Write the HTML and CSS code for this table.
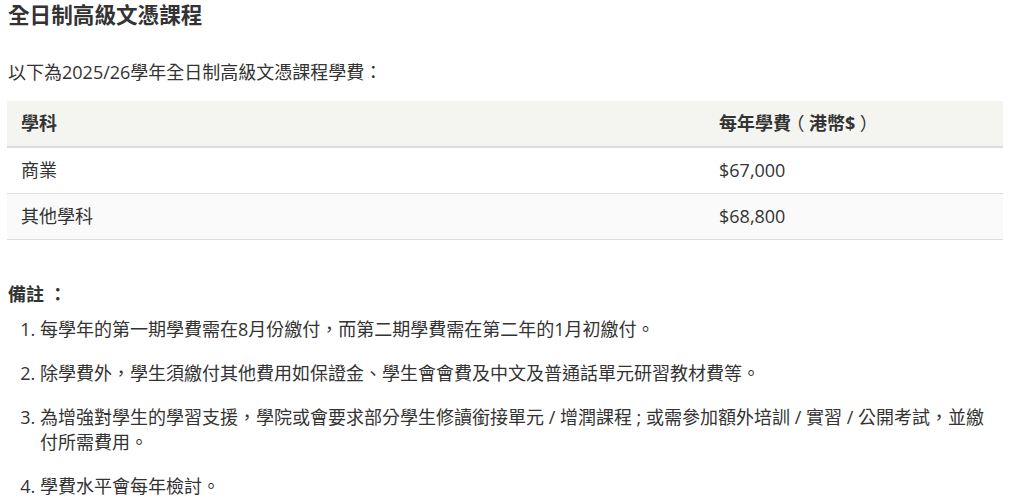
FILE: index.html
```html
<!DOCTYPE html>
<html lang="zh-Hant">
<head>
<meta charset="utf-8">
<link rel="stylesheet" href="styles.css">
</head>
<body>
<div class="page">
  <h2 class="title">全日制高級文憑課程</h2>
  <p class="intro">以下為2025/26學年全日制高級文憑課程學費：</p>
  <table class="fees">
    <thead>
      <tr><th class="col-subject">學科</th><th>每年學費<span class="paren">（</span>港幣$<span class="paren">）</span></th></tr>
    </thead>
    <tbody>
      <tr><td>商業</td><td>$67,000</td></tr>
      <tr class="alt"><td>其他學科</td><td>$68,800</td></tr>
    </tbody>
  </table>
  <p class="notes-title">備註 ：</p>
  <ol class="notes">
    <li>每學年的第一期學費需在8月份繳付，而第二期學費需在第二年的1月初繳付。</li>
    <li>除學費外，學生須繳付其他費用如保證金、學生會會費及中文及普通話單元研習教材費等。</li>
    <li>為增強對學生的學習支援，學院或會要求部分學生修讀銜接單元 / 增潤課程 ; 或需參加額外培訓 / 實習 / 公開考試，並繳付所需費用。</li>
    <li>學費水平會每年檢討。</li>
  </ol>
</div>
</body>
</html>
```

FILE: styles.css
```css
html, body {
  margin: 0;
  padding: 0;
  background: #fff;
}
body {
  font-family: "Open Sans", "Noto Sans CJK TC", sans-serif;
  font-size: 18px;
  color: #333;
  text-spacing-trim: space-all;
}
.page {
  padding: 0 8px;
  width: 996px;
}
.title {
  margin: 0;
  padding-top: 2px;
  font-size: 21.6px;
  line-height: 26px;
  font-weight: bold;
  color: #333;
}
.intro {
  margin: 32px 0 0;
  line-height: 25px;
}
.fees {
  margin: 16px 0 0 -1px;
  width: 996px;
  border-collapse: collapse;
}
.fees th, .fees td {
  text-align: left;
  padding: 10px 14px;
  line-height: 25px;
  font-size: 18px;
}
.fees th {
  background: #f4f4f0;
  font-weight: bold;
  border-bottom: 2px solid #dcdcdc;
}
.fees .paren {
  display: inline-block;
  width: 18px;
  text-align: center;
  font-weight: normal;
  font-feature-settings: "halt";
}
.fees .col-subject {
  width: 670px;
}
.fees td {
  border-bottom: 1px solid #dedede;
}
.fees tr.alt td {
  background: #fafafa;
}
.notes-title {
  margin: 42px 0 0;
  font-weight: bold;
  line-height: 25px;
}
.notes {
  margin: 10px 0 0;
  padding: 0 16px 0 32px;
}
.notes li {
  line-height: 25px;
  margin-bottom: 19px;
  padding-left: 0;
}
```
